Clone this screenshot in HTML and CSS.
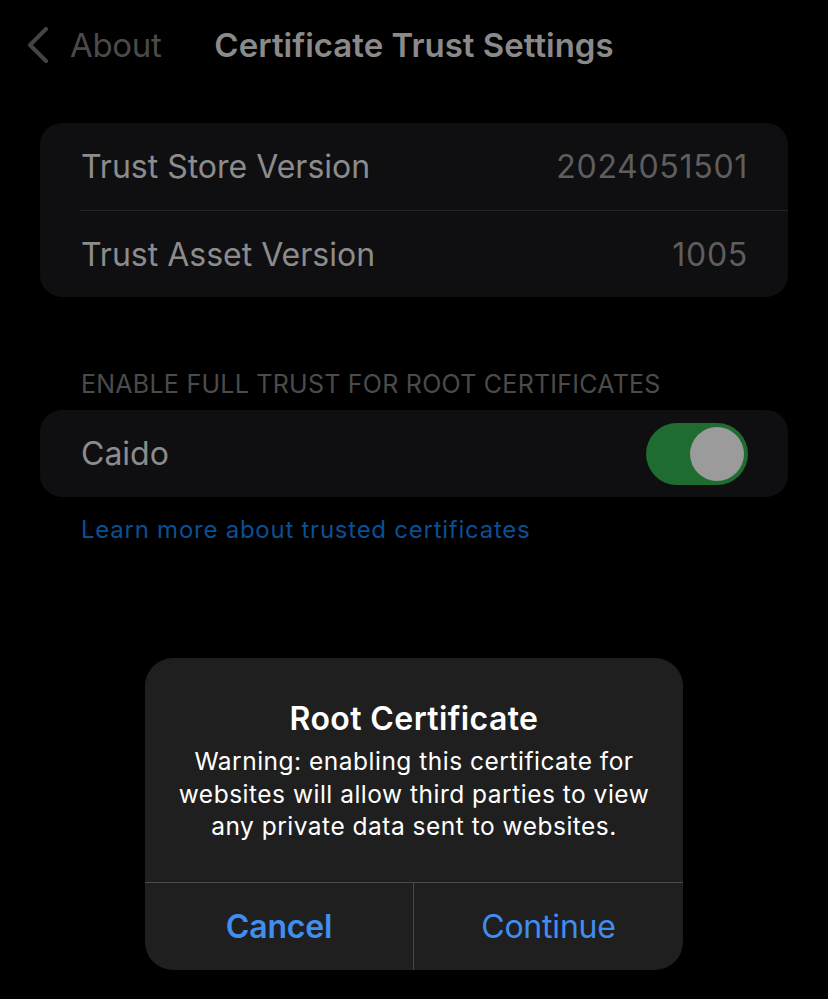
FILE: index.html
```html
<!DOCTYPE html>
<html>
<head>
<meta charset="utf-8">
<link rel="stylesheet" href="styles.css">
</head>
<body>
<div class="screen">
  <header class="nav">
    <div class="back">
      <svg class="chev" width="24" height="36" viewBox="0 0 24 36"><path d="M20 2 L4 18 L20 34" fill="none" stroke="#444" stroke-width="4" stroke-linecap="round" stroke-linejoin="round"/></svg>
      <span class="back-label">About</span>
    </div>
    <h1 class="title">Certificate Trust Settings</h1>
    <div></div>
  </header>

  <section class="card">
    <div class="row">
      <span class="label">Trust Store Version</span>
      <span class="value">2024051501</span>
    </div>
    <div class="row">
      <span class="label">Trust Asset Version</span>
      <span class="value">1005</span>
    </div>
  </section>

  <div class="section-header">ENABLE FULL TRUST FOR ROOT CERTIFICATES</div>
  <section class="card">
    <div class="row">
      <span class="label">Caido</span>
      <span class="toggle"><span class="knob"></span></span>
    </div>
  </section>
  <a class="link">Learn more about trusted certificates</a>

  <div class="alert">
    <div class="alert-body">
      <div class="alert-title">Root Certificate</div>
      <div class="alert-msg">Warning: enabling this certificate for websites will allow third parties to view any private data sent to websites.</div>
    </div>
    <div class="alert-actions">
      <div class="btn btn-cancel">Cancel</div>
      <div class="btn btn-continue">Continue</div>
    </div>
  </div>
</div>
</body>
</html>
```
FILE: styles.css
```css
* { box-sizing: border-box; }
html, body { margin: 0; padding: 0; background: #000; }
body { font-family: "Inter", "Noto Sans", sans-serif; }
.screen { position: relative; width: 828px; height: 999px; overflow: hidden; background: #000; }

.nav {
  display: grid;
  grid-template-columns: 1fr auto 1fr;
  align-items: center;
  height: 90px;
}
.back { display: flex; align-items: center; gap: 20px; padding-left: 26px; }
.chev { display: block; }
.back-label { font-size: 33px; color: #4a4a4a; letter-spacing: -0.3px; }
.title { margin: 0; font-size: 33px; font-weight: 600; color: #8a8a8a; letter-spacing: 0; }

.card {
  margin: 33px 40px 0;
  background: #0f0f11;
  border-radius: 22px;
  overflow: hidden;
}
.row {
  height: 87px;
  display: flex;
  align-items: center;
  justify-content: space-between;
  padding: 0 40px 0 41px;
  position: relative;
}
.row + .row { border-top: 1px solid #242426; margin-left: 40px; padding-left: 1px; }
.label { font-size: 32px; color: #8c8c8c; letter-spacing: 0; }
.value { font-size: 32px; color: #5e5e5e; letter-spacing: 0.7px; }

.section-header {
  margin: 72px 0 0 81px;
  font-size: 25px;
  color: #4b4b4b;
  letter-spacing: 0.25px;
  line-height: 30px;
}
.section-header + .card { margin-top: 11px; }

.toggle {
  width: 102px;
  height: 62px;
  border-radius: 31px;
  background: #1f6c30;
  display: flex;
  align-items: center;
  justify-content: flex-end;
  padding-right: 4px;
}
.knob { width: 54px; height: 54px; border-radius: 50%; background: #9b9b9b; }

.link {
  display: block;
  margin: 18px 0 0 81px;
  font-size: 24px;
  color: #0b4f93;
  line-height: 30px;
  letter-spacing: 0.75px;
}

.alert {
  position: absolute;
  left: 145px;
  top: 658px;
  width: 538px;
  height: 312px;
  background: #1f1f1f;
  border-radius: 28px;
  overflow: hidden;
  display: flex;
  flex-direction: column;
}
.alert-body {
  height: 224px;
  padding: 41px 20px 0;
  text-align: center;
  color: #fff;
}
.alert-title { font-size: 32px; font-weight: 600; line-height: 40px; letter-spacing: 0.4px; }
.alert-msg { font-size: 24.5px; line-height: 32.5px; margin-top: 6px; letter-spacing: 0.5px; }
.alert-actions {
  flex: 1;
  display: grid;
  grid-template-columns: 1fr 1fr;
  border-top: 1px solid #4a4a4a;
}
.btn {
  display: flex;
  align-items: center;
  justify-content: center;
  font-size: 32px;
  color: #3f8ef0;
  letter-spacing: -0.2px;
}
.btn-cancel { font-weight: 600; border-right: 1px solid #4a4a4a; }
```
